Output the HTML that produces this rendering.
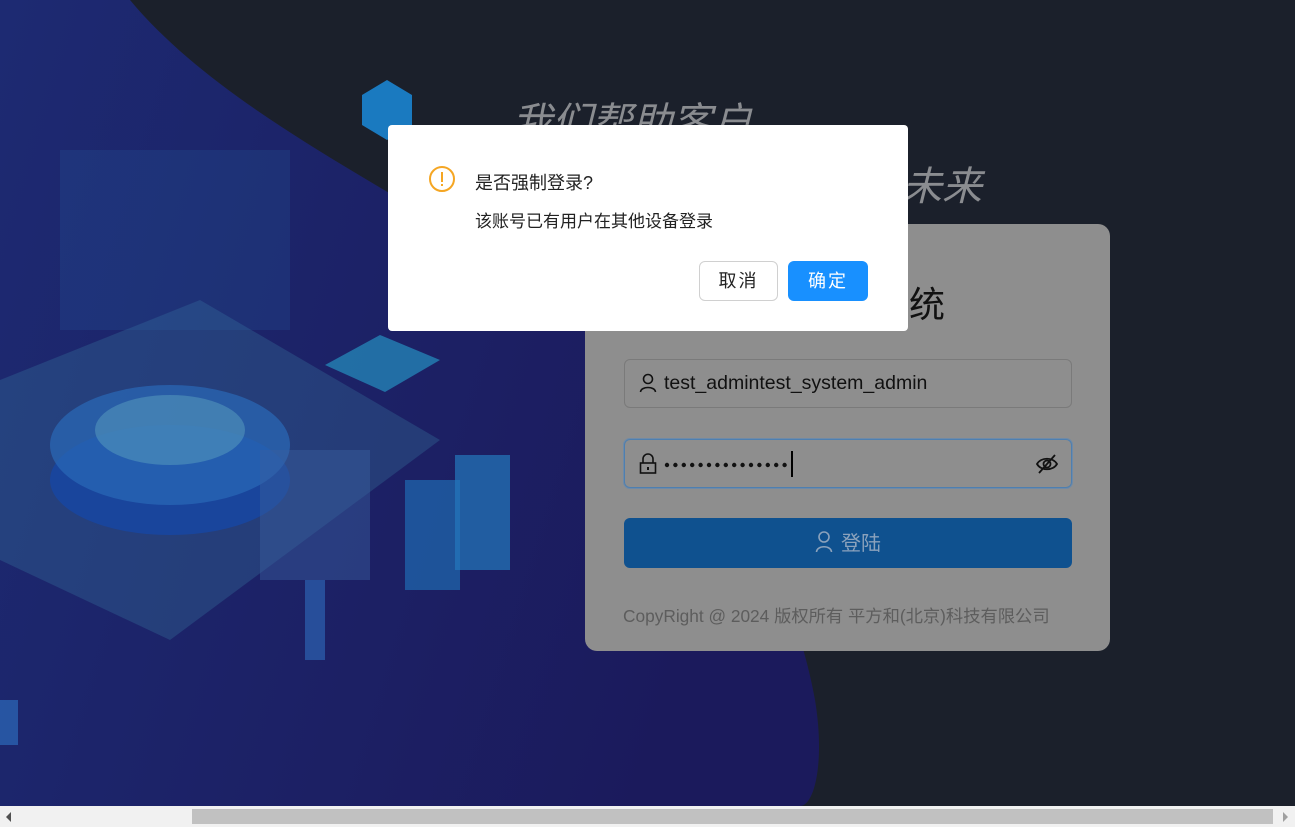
<!DOCTYPE html>
<html><head><meta charset="utf-8"><style>
*{margin:0;padding:0;box-sizing:border-box}
body{width:1295px;height:827px;overflow:hidden;background:#1b202b;font-family:"Liberation Sans","Noto Sans CJK SC",sans-serif;position:relative}
.abs{position:absolute}
</style></head><body>
<svg class="abs" style="left:0;top:0" width="1295" height="806">
<defs>
<linearGradient id="bl" x1="0" y1="0" x2="1" y2="0.3"><stop offset="0" stop-color="#1d2a72"/><stop offset="1" stop-color="#1b1a5c"/></linearGradient>
</defs>
<path d="M0 0 L130 0 C230 120 420 200 560 300 C700 420 790 560 815 700 C825 760 815 806 800 806 L0 806 Z" fill="url(#bl)"/>
<path d="M0 380 L200 300 L440 440 L170 640 L0 560 Z" fill="#3f8fae" opacity=".25"/>
<rect x="60" y="150" width="230" height="180" fill="#2d6fb0" opacity=".18"/>
<ellipse cx="170" cy="480" rx="120" ry="55" fill="#1846a0" opacity=".9"/>
<ellipse cx="170" cy="445" rx="120" ry="60" fill="#2a6ab8" opacity=".7"/>
<ellipse cx="170" cy="430" rx="75" ry="35" fill="#5aa0c0" opacity=".5"/>
<rect x="405" y="480" width="55" height="110" fill="#1f6ab0" opacity=".7"/>
<rect x="455" y="455" width="55" height="115" fill="#2378bc" opacity=".7"/>
<rect x="260" y="450" width="110" height="130" fill="#3a5fa0" opacity=".45"/>
<path d="M325 365 L380 335 L440 360 L385 392 Z" fill="#2590c0" opacity=".7"/>
<path d="M362 95 L387 80 L412 95 L412 125 L387 140 L362 125 Z" fill="#1a7ac0"/>
<rect x="305" y="580" width="20" height="80" fill="#2a5aa8" opacity=".8"/>
<rect x="0" y="700" width="18" height="45" fill="#2a62b0" opacity=".8"/>
</svg>
<div class="abs" style="left:512px;top:90px;font-size:40px;font-style:italic;color:#8a8c90;white-space:nowrap">我们帮助客户</div>
<div class="abs" style="right:313px;top:154px;font-size:40px;font-style:italic;color:#8a8c90;white-space:nowrap">创造未来</div>
<div class="abs" style="left:585px;top:224px;width:525px;height:427px;background:#8e8e8e;border-radius:12px">
<div class="abs" style="right:165px;top:52px;font-size:36px;color:#111;white-space:nowrap">管理系统</div>
<div class="abs" style="left:39px;top:135px;width:448px;height:49px;border:1px solid #7a7a7a;border-radius:6px">
<svg class="abs" style="left:14px;top:13px" width="18" height="20" viewBox="0 0 18 20"><circle cx="9" cy="6" r="4.5" fill="none" stroke="#111" stroke-width="1.6"/><path d="M1.5 19 C2 13 16 13 16.5 19" fill="none" stroke="#111" stroke-width="1.6"/></svg>
<div class="abs" style="left:39px;top:12px;font-size:19.5px;color:#111">test_admintest_system_admin</div></div>
<div class="abs" style="left:39px;top:215px;width:448px;height:49px;border:1px solid #4e7fb0;border-radius:6px;box-shadow:0 0 0 1px #6e8aa8">
<svg class="abs" style="left:14px;top:13px" width="18" height="22" viewBox="0 0 18 22"><path d="M4 10V6a5 5 0 0110 0v4" fill="none" stroke="#111" stroke-width="1.6"/><rect x="1.5" y="10" width="15" height="10" fill="none" stroke="#111" stroke-width="1.6"/><rect x="8" y="14" width="2" height="3" fill="#111"/></svg>
<svg class="abs" style="left:39px;top:21px" width="130" height="8">
<g fill="#111"><circle cx="3" cy="4" r="2.2"/><circle cx="11.4" cy="4" r="2.2"/><circle cx="19.8" cy="4" r="2.2"/><circle cx="28.2" cy="4" r="2.2"/><circle cx="36.6" cy="4" r="2.2"/><circle cx="45" cy="4" r="2.2"/><circle cx="53.4" cy="4" r="2.2"/><circle cx="61.8" cy="4" r="2.2"/><circle cx="70.2" cy="4" r="2.2"/><circle cx="78.6" cy="4" r="2.2"/><circle cx="87" cy="4" r="2.2"/><circle cx="95.4" cy="4" r="2.2"/><circle cx="103.8" cy="4" r="2.2"/><circle cx="112.2" cy="4" r="2.2"/><circle cx="120.6" cy="4" r="2.2"/></g></svg>
<div class="abs" style="left:166px;top:11px;width:2px;height:26px;background:#000"></div>
<svg class="abs" style="left:411px;top:14px" width="22" height="20" viewBox="0 0 22 20"><path d="M1 10 C5 3 17 3 21 10 C17 17 5 17 1 10Z" fill="none" stroke="#111" stroke-width="1.8"/><circle cx="11" cy="10" r="3.5" fill="none" stroke="#111" stroke-width="1.8"/><path d="M3 19L19 1" stroke="#111" stroke-width="1.8"/></svg></div>
<div class="abs" style="left:39px;top:294px;width:448px;height:50px;background:#0f518f;border-radius:6px;text-align:center;color:#8ba2bc;font-size:20px;line-height:52px">
<svg style="vertical-align:-3px;margin-right:8px" width="18" height="22" viewBox="0 0 18 22"><circle cx="9" cy="6" r="5" fill="none" stroke="#8ba2bc" stroke-width="1.6"/><path d="M1.5 21 C2 14 16 14 16.5 21" fill="none" stroke="#8ba2bc" stroke-width="1.6"/></svg>登陆</div>
<div class="abs" style="left:38px;top:378px;font-size:17.3px;color:#5d5d5d;white-space:nowrap">CopyRight @ 2024 版权所有 平方和(北京)科技有限公司</div>
</div>
<div class="abs" style="left:388px;top:125px;width:520px;height:206px;background:#fff;border-radius:4px">
<svg class="abs" style="left:40px;top:40px" width="28" height="28" viewBox="0 0 28 28"><circle cx="14" cy="14" r="12" fill="none" stroke="#f5a623" stroke-width="2"/><rect x="13" y="7" width="2" height="10" fill="#f5a623"/><rect x="13" y="19" width="2" height="2" fill="#f5a623"/></svg>
<div class="abs" style="left:87px;top:44px;font-size:18px;color:#222">是否强制登录?</div>
<div class="abs" style="left:87px;top:82px;font-size:17px;color:#222">该账号已有用户在其他设备登录</div>
<div class="abs" style="left:311px;top:136px;width:79px;height:40px;border:1px solid #d0d0d0;border-radius:6px;text-align:center;line-height:38px;font-size:18px;color:#222;letter-spacing:2px">取消</div>
<div class="abs" style="left:400px;top:136px;width:80px;height:40px;background:#1890ff;border-radius:6px;text-align:center;line-height:40px;font-size:18px;color:#fff;letter-spacing:2px">确定</div>
</div>
<div class="abs" style="left:0;top:806px;width:1295px;height:21px;background:#f1f1f1">
<div class="abs" style="left:192px;top:3px;width:1081px;height:15px;background:#c1c1c1"></div>
<div class="abs" style="left:6px;top:6px;width:0;height:0;border-top:5px solid transparent;border-bottom:5px solid transparent;border-right:5px solid #505050"></div>
<div class="abs" style="left:1283px;top:6px;width:0;height:0;border-top:5px solid transparent;border-bottom:5px solid transparent;border-left:5px solid #a0a0a0"></div>
</div>
</body></html>
